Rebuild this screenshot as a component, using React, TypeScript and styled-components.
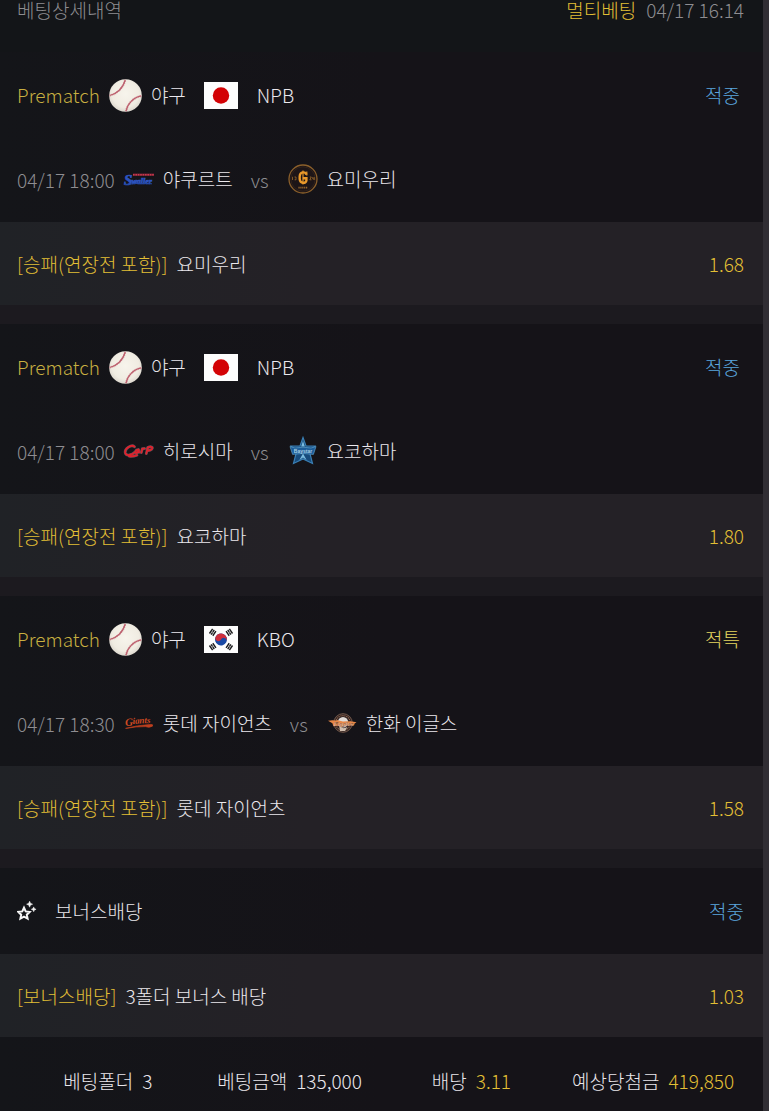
import React from "react";
import styled, { createGlobalStyle } from "styled-components";

const GlobalStyle = createGlobalStyle`
  *, *::before, *::after { box-sizing: border-box; }
  html { background: #151318; }
  body {
    margin: 0;
    font-family: "Noto Sans CJK KR", "Noto Sans", sans-serif;
    font-size: 19px;
    font-weight: 300;
    line-height: 24px;
    color: #ebe8ed;
  }
  h1, h2, h3, p, dl, dd, dt { margin: 0; font-size: inherit; font-weight: inherit; }
  svg { display: block; flex: none; }
`;

type Tone = "gold" | "olive" | "blue" | "yellow" | "muted" | "plain";

const tones: Record<Tone, string> = {
  gold: "#e2bf35",
  olive: "#c8b041",
  blue: "#5ba6de",
  yellow: "#e6d660",
  muted: "#8e8d91",
  plain: "#ebe8ed",
};

const Page = styled.main`
  min-height: 100vh;
  border-right: 6px solid #312e34;
  background: #1c1a1f;
  display: flex;
  flex-direction: column;
`;

const Text = styled.span<{ $tone?: Tone }>`
  color: ${({ $tone = "plain" }) => tones[$tone]};
  white-space: nowrap;
`;

const Row = styled.div`
  display: flex;
  align-items: center;
  padding: 0 19px 0 17px;
  background: linear-gradient(90deg, #141519, #151318 50%);
`;

const TitleBar = styled.header`
  display: flex;
  justify-content: space-between;
  height: 52px;
  padding: 0 19px 0 17px;
  background: #131518;
  line-height: 20px;
`;

const TitleMeta = styled.div`
  display: flex;
  gap: 10px;
`;

const Selections = styled.div`
  display: flex;
  flex-direction: column;
  gap: 19px;
`;

const HeadRow = styled(Row)`
  height: 86px;
`;

const TeamsRow = styled(Row)`
  height: 84px;
  padding-bottom: 3px;
`;

const OddsRow = styled(Row)`
  height: 83px;
  gap: 9px;
  background: linear-gradient(90deg, #202226, #242126 40%);
`;

const Sport = styled.div`
  display: flex;
  align-items: center;
  gap: 9px;
  margin: 0 18px 0 9px;
`;

const League = styled(Text)`
  margin-left: 19px;
`;

const Result = styled(Text)<{ $inset?: boolean }>`
  margin-left: auto;
  padding-right: ${({ $inset }) => ($inset ? "4px" : "0")};
`;

const Kickoff = styled.time`
  color: ${tones.muted};
  margin-right: 8px;
  padding-top: 2px;
  white-space: nowrap;
`;

const Team = styled.div`
  display: flex;
  align-items: center;
  gap: 8px;
`;

const Versus = styled(Text)`
  margin: 0 18px;
  padding-top: 2px;
`;

const BonusTitle = styled.h2`
  display: flex;
  align-items: center;
  gap: 18px;
`;

const Summary = styled.dl`
  flex: 1;
  display: grid;
  grid-template-columns: repeat(4, 1fr);
  align-items: start;
  padding: 32px 19px 17px 17px;
  background: linear-gradient(90deg, #141519, #151318 50%);
`;

const SummaryItem = styled.div`
  display: flex;
  justify-content: center;
  gap: 9px;
  white-space: nowrap;
`;

const SummaryValue = styled.dd<{ $tone?: Tone }>`
  color: ${({ $tone = "plain" }) => tones[$tone]};
`;

const Baseball = () => (
  <svg width="33" height="33" viewBox="0 0 34 34" aria-hidden="true">
    <defs>
      <radialGradient id="ball" cx="50%" cy="45%" r="55%">
        <stop offset="0" stopColor="#f7f4ec" />
        <stop offset="0.75" stopColor="#f0ece2" />
        <stop offset="1" stopColor="#dcd7ce" />
      </radialGradient>
    </defs>
    <circle cx="17" cy="17" r="16.8" fill="url(#ball)" />
    <g fill="none" stroke="#bd5f6e">
      <path d="M.7 17C8 15.5 14.5 9.5 16.8 .8M17.5 33.2C19 25.5 25 19 33.3 17.4" strokeWidth="1.3" />
      <path d="M.7 17C8 15.5 14.5 9.5 16.8 .8M17.5 33.2C19 25.5 25 19 33.3 17.4" strokeWidth="2.4" strokeDasharray="0.8 1.2" opacity="0.55" />
    </g>
  </svg>
);

const JapanFlag = () => (
  <svg width="34" height="27" viewBox="0 0 34 27" role="img" aria-label="일본">
    <rect width="34" height="27" fill="#fdfdfd" />
    <circle cx="17" cy="13.5" r="8.2" fill="#d30205" />
  </svg>
);

const Bars = ({ x, y, turn }: { x: number; y: number; turn: number }) => (
  <g transform={`translate(${x} ${y}) rotate(${turn})`} stroke="#1c1c1e" strokeWidth="1.4">
    <path d="M-2.8-2H2.8M-2.8 0H2.8M-2.8 2H2.8" />
    <path d="M0-.7V.7" stroke="#fff" strokeWidth="0.5" />
  </g>
);

const KoreaFlag = () => (
  <svg width="34" height="27" viewBox="0 0 34 27" role="img" aria-label="대한민국">
    <rect width="34" height="27" fill="#fdfdfd" />
    <g transform="rotate(28 17 13.5)">
      <circle cx="17" cy="13.5" r="6" fill="#1949a5" />
      <path d="M11 13.5a6 6 0 0 1 12 0a3 3 0 0 0-6 0a3 3 0 0 1-6 0z" fill="#ce2e3c" />
    </g>
    <Bars x={8.7} y={6.3} turn={-56} />
    <Bars x={25.3} y={6.3} turn={56} />
    <Bars x={8.7} y={20.7} turn={56} />
    <Bars x={25.3} y={20.7} turn={-56} />
  </svg>
);

const SwallowsLogo = () => (
  <svg width="32" height="32" viewBox="0 0 32 32" aria-hidden="true">
    <path d="M10 11.7H31" stroke="#6e2133" strokeWidth="2.4" />
    <path d="M10 11.7H31" stroke="#c93a4c" strokeWidth="1.4" strokeDasharray="1.6 0.8" />
    <g fontFamily="Liberation Serif, serif" fontStyle="italic" fontWeight="700" fill="#2c53bf" stroke="#2c53bf" strokeWidth="0.7">
      <text x="1" y="21.5" fontSize="15">S</text>
      <text x="8.5" y="20.5" fontSize="8">waller</text>
    </g>
    <path d="M1 21.6Q15 19.4 29 20.8" fill="none" stroke="#2347a2" strokeWidth="1" />
  </svg>
);

const YomiuriLogo = () => (
  <svg width="32" height="32" viewBox="0 0 32 32" aria-hidden="true">
    <circle cx="16" cy="16" r="14" fill="#1d1517" stroke="#8c602b" strokeWidth="1.3" />
    <circle cx="16" cy="16" r="12.2" fill="none" stroke="#3d2a1d" strokeWidth="0.6" />
    <g fill="none" stroke="#e9992b">
      <path d="M19.4 11.6C18.6 8.6 13 8.2 12.7 13.2V16C13 20.8 19 20.8 19.4 17.6V15.2H15.8" strokeWidth="2.4" />
      <path d="M16 7.6V21.4" strokeWidth="1.1" />
      <path d="M19.8 8.6V12.4" strokeWidth="1.2" />
    </g>
    <path d="M5.5 13.8V17M7.5 14H9V16.8H7.6M22.8 14H24.3L22.8 16.8H24.5M25.8 14V16H27.4M27.2 14V17" fill="none" stroke="#9a692c" strokeWidth="0.8" />
    <path d="M11.5 24.7H20.5" stroke="#aa7330" strokeWidth="1.8" strokeDasharray="1.1 0.8" />
  </svg>
);

const carpScript =
  "M11.5 11.7C8.5 9 1.5 13.5 2.2 17.8C3 21.5 9 20.2 12 17M15.3 14.6C12.6 14.4 11.6 17.8 13.2 18S16 15 15.6 14.6L16 17.4M18.3 17.6L19.3 13.6M19 15Q20.3 13 21.6 13.5M23.3 18.6L24.8 12.4M24.4 13.2C26.4 10.8 31 11.6 28.8 14.2Q27 15.9 24.2 15.4M6 21.2Q10 21.8 14 20.2";

const CarpLogo = () => (
  <svg width="32" height="32" viewBox="0 0 32 32" aria-hidden="true">
    <g fill="none" strokeLinecap="round" strokeLinejoin="round">
      <path d={carpScript} stroke="#a48c96" strokeWidth="2.8" opacity="0.5" />
      <path d={carpScript} stroke="#e0212c" strokeWidth="1.8" />
    </g>
  </svg>
);

const BayStarsLogo = () => (
  <svg width="32" height="32" viewBox="0 0 32 32" aria-hidden="true">
    <path d="M16 2.5L19 11H28L22.8 18L25.5 28.5L16 24L6.5 28.5L9.2 18L4 11H13z" fill="#174b7c" stroke="#3a7fb4" strokeWidth="1.2" />
    <path d="M16 6L17.8 11.4H14.2zM16 18.5L19.6 25L16 22.4L12.4 25z" fill="#7bbce0" />
    <path d="M3 11.5L8 13Q16 11.4 24 13L29 11.5L26.4 19.4Q16 17.4 5.6 19.4z" fill="#1d5c98" stroke="#5c9dca" strokeWidth="0.7" />
    <text x="16" y="17.9" textAnchor="middle" fontFamily="Liberation Sans, sans-serif" fontSize="5" fontWeight="700" fill="#a9cfe2">Baystar</text>
  </svg>
);

const GiantsLogo = () => (
  <svg width="32" height="32" viewBox="0 0 32 32" aria-hidden="true">
    <g transform="rotate(-3 16 16)" fontFamily="Liberation Serif, serif" fontStyle="italic" fontWeight="700" fill="#cf4a22">
      <text x="2" y="18.2" fontSize="11">G</text>
      <text x="9.6" y="16.6" fontSize="9">iants</text>
    </g>
    <path d="M2.6 21.4Q14 18.2 28 17.4Q30.5 17.2 29.4 19.2Q26 21.2 22.5 19.6Q14 19.4 2.6 21.4z" fill="#bd3f1e" stroke="#bd3f1e" strokeWidth="0.7" />
  </svg>
);

const EaglesLogo = () => (
  <svg width="32" height="32" viewBox="0 0 32 32" aria-hidden="true">
    <circle cx="17" cy="16" r="9.3" fill="#2e2322" stroke="#8b6a58" strokeWidth="0.8" />
    <circle cx="17" cy="16" r="7.4" fill="none" stroke="#9a6a50" strokeWidth="1.1" strokeDasharray="1.2 0.8" />
    <circle cx="17" cy="15.2" r="5.2" fill="#e2dcd8" />
    <path d="M13 18Q16 23 21.5 20L19 24H14z" fill="#cfbdae" />
    <path d="M2 13.8Q6 12.6 10 13.6L11 13L17 14.4Q24 13.6 30.5 15.2L28.6 16.6L28 18.6Q21 17.8 15 19.4Q10 18 7.4 19.2L6.4 16.2z" fill="#e88848" />
    <text x="17.5" y="18.6" textAnchor="middle" fontFamily="Liberation Serif, serif" fontStyle="italic" fontSize="7" fontWeight="700" fill="#f6dcc4" stroke="#7b3a20" strokeWidth="0.25">Eagles</text>
  </svg>
);

const BonusStar = () => (
  <svg width="20" height="20" viewBox="0 0 20 20" aria-hidden="true">
    <path d="M7 6.6L8.7 10.4L12.7 10.9L9.8 13.7L10.6 17.7L7 15.7L3.4 17.7L4.2 13.7L1.3 10.9L5.3 10.4z" fill="none" stroke="#f7f7f7" strokeWidth="2" />
    <path d="M12.6.2L13.5 2.3L15.6 3.2L13.5 4.1L12.6 6.2L11.7 4.1L9.6 3.2L11.7 2.3zM16.7 5.9L17.4 7.6L19.1 8.3L17.4 9L16.7 10.7L16 9L14.3 8.3L16 7.6z" fill="#f7f7f7" stroke="#f7f7f7" strokeWidth="0.5" />
  </svg>
);

interface Selection {
  flag: React.ReactNode;
  league: string;
  result: string;
  resultTone: Tone;
  kickoff: string;
  home: { name: string; logo: React.ReactNode };
  away: { name: string; logo: React.ReactNode };
  pick: string;
  odds: string;
}

const selections: Selection[] = [
  {
    flag: <JapanFlag />,
    league: "NPB",
    result: "적중",
    resultTone: "blue",
    kickoff: "04/17 18:00",
    home: { name: "야쿠르트", logo: <SwallowsLogo /> },
    away: { name: "요미우리", logo: <YomiuriLogo /> },
    pick: "요미우리",
    odds: "1.68",
  },
  {
    flag: <JapanFlag />,
    league: "NPB",
    result: "적중",
    resultTone: "blue",
    kickoff: "04/17 18:00",
    home: { name: "히로시마", logo: <CarpLogo /> },
    away: { name: "요코하마", logo: <BayStarsLogo /> },
    pick: "요코하마",
    odds: "1.80",
  },
  {
    flag: <KoreaFlag />,
    league: "KBO",
    result: "적특",
    resultTone: "yellow",
    kickoff: "04/17 18:30",
    home: { name: "롯데 자이언츠", logo: <GiantsLogo /> },
    away: { name: "한화 이글스", logo: <EaglesLogo /> },
    pick: "롯데 자이언츠",
    odds: "1.58",
  },
];

const SelectionCard = ({ item }: { item: Selection }) => (
  <section>
    <HeadRow>
      <Text $tone="olive">Prematch</Text>
      <Sport>
        <Baseball />
        <Text>야구</Text>
      </Sport>
      {item.flag}
      <League>{item.league}</League>
      <Result $tone={item.resultTone} $inset>{item.result}</Result>
    </HeadRow>
    <TeamsRow>
      <Kickoff>{item.kickoff}</Kickoff>
      <Team>
        {item.home.logo}
        <Text>{item.home.name}</Text>
      </Team>
      <Versus $tone="muted">vs</Versus>
      <Team>
        {item.away.logo}
        <Text>{item.away.name}</Text>
      </Team>
    </TeamsRow>
    <OddsRow>
      <Text $tone="gold">[승패(연장전 포함)]</Text>
      <Text>{item.pick}</Text>
      <Result $tone="gold">{item.odds}</Result>
    </OddsRow>
  </section>
);

const summary: { label: string; value: string; tone?: Tone }[] = [
  { label: "베팅폴더", value: "3" },
  { label: "베팅금액", value: "135,000" },
  { label: "배당", value: "3.11", tone: "gold" },
  { label: "예상당첨금", value: "419,850", tone: "gold" },
];

export default function App() {
  return (
    <>
      <GlobalStyle />
      <Page>
        <TitleBar>
          <h1><Text $tone="muted">베팅상세내역</Text></h1>
          <TitleMeta>
            <Text $tone="gold">멀티베팅</Text>
            <Text $tone="muted">04/17 16:14</Text>
          </TitleMeta>
        </TitleBar>
        <Selections>
          {selections.map((item) => (
            <SelectionCard key={item.home.name} item={item} />
          ))}
          <section>
            <HeadRow>
              <BonusTitle>
                <BonusStar />
                <Text>보너스배당</Text>
              </BonusTitle>
              <Result $tone="blue">적중</Result>
            </HeadRow>
            <OddsRow>
              <Text $tone="gold">[보너스배당]</Text>
              <Text>3폴더 보너스 배당</Text>
              <Result $tone="gold">1.03</Result>
            </OddsRow>
          </section>
        </Selections>
        <Summary>
          {summary.map(({ label, value, tone }) => (
            <SummaryItem key={label}>
              <dt>{label}</dt>
              <SummaryValue $tone={tone}>{value}</SummaryValue>
            </SummaryItem>
          ))}
        </Summary>
      </Page>
    </>
  );
}
